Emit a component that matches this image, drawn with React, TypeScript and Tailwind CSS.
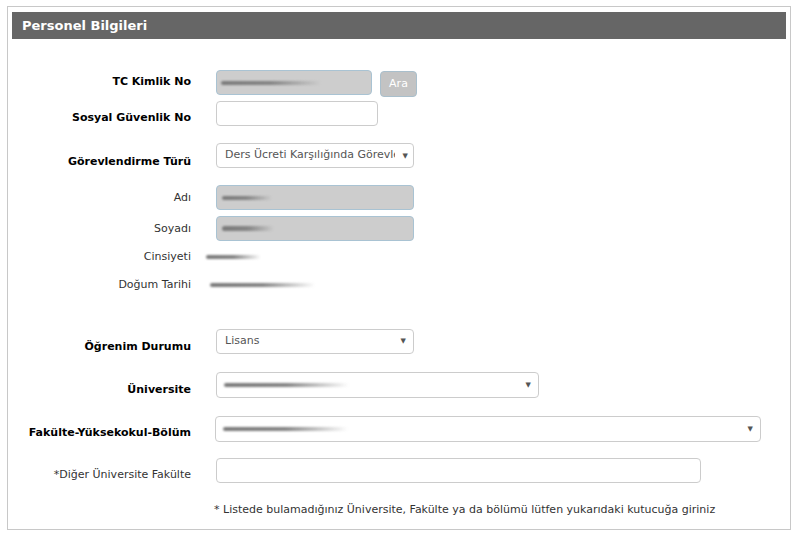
import React from "react";

const Blur = ({ w, className = "" }: { w: number; className?: string }) => (
  <div
    className={"h-[4px] rounded-full blur-[1px] bg-gradient-to-r from-[#7a7a7a] via-[#858585] to-transparent " + className}
    style={{ width: w }}
  />
);

const Arrow = () => (
  <span className="text-[7px] text-[#555] leading-none">▼</span>
);

export default function App() {
  return (
    <div className="bg-white w-[800px] h-[538px] pt-[6px] pl-[7px]" style={{ fontFamily: '"DejaVu Sans", Verdana, sans-serif' }}>
      <div className="w-[784px] h-[524px] border border-[#c8c8c8] px-[4px] pt-[5px] flex flex-col">
        <div className="h-[27px] bg-[#666666] flex items-center pl-[10px]">
          <span className="text-white font-bold text-[13px]">Personel Bilgileri</span>
        </div>

        <div className="flex flex-col -ml-[4px] text-[11px] text-[#333]">
          {/* TC */}
          <div className="flex items-start h-[25px] mt-[31px]">
            <div className="w-[183px] text-right font-bold text-black leading-[16px] mt-[4px]">TC Kimlik No</div>
            <div className="ml-[25px] w-[156px] h-[25px] rounded-[4px] bg-[#cdcdcd] border border-[#a9c3d3] flex items-center pl-[4px]">
              <Blur w={100} />
            </div>
            <button className="ml-[8px] mt-[1px] w-[37px] h-[26px] rounded-[4px] bg-[#c3c3c3] border border-[#a9bfcc] text-white text-[11px]">
              Ara
            </button>
          </div>
          {/* SGK */}
          <div className="flex items-start h-[25px] mt-[6px]">
            <div className="w-[183px] text-right font-bold text-black leading-[16px] mt-[9px]">Sosyal Güvenlik No</div>
            <div className="ml-[25px] w-[162px] h-[25px] rounded-[4px] bg-white border border-[#cccccc]" />
          </div>
          {/* Gorev */}
          <div className="flex items-start h-[25px] mt-[17px]">
            <div className="w-[183px] text-right font-bold text-black leading-[16px] mt-[11px]">Görevlendirme Türü</div>
            <div className="ml-[25px] w-[198px] h-[25px] rounded-[4px] bg-white border border-[#cccccc] flex items-center pl-[8px] pr-[5px] text-[#555] text-[11px]">
              <span className="w-[170px] overflow-hidden whitespace-nowrap">Ders Ücreti Karşılığında Görevlendirme</span>
              <span className="ml-auto"><Arrow /></span>
            </div>
          </div>
          {/* Adi */}
          <div className="flex items-start h-[25px] mt-[17px]">
            <div className="w-[183px] text-right leading-[16px] mt-[5px]">Adı</div>
            <div className="ml-[25px] w-[198px] h-[25px] rounded-[4px] bg-[#cdcdcd] border border-[#a9c3d3] flex items-center pl-[5px]">
              <Blur w={50} />
            </div>
          </div>
          {/* Soyadi */}
          <div className="flex items-start h-[25px] mt-[6px]">
            <div className="w-[183px] text-right leading-[16px] mt-[5px]">Soyadı</div>
            <div className="ml-[25px] w-[198px] h-[25px] rounded-[4px] bg-[#cdcdcd] border border-[#a9c3d3] flex items-center pl-[5px]">
              <Blur w={52} className="h-[5px]" />
            </div>
          </div>
          {/* Cinsiyeti */}
          <div className="flex items-center h-[16px] mt-[8px]">
            <div className="w-[183px] text-right leading-[16px]">Cinsiyeti</div>
            <div className="ml-[15px]"><Blur w={55} /></div>
          </div>
          {/* Dogum */}
          <div className="flex items-center h-[16px] mt-[12px]">
            <div className="w-[183px] text-right leading-[16px]">Doğum Tarihi</div>
            <div className="ml-[19px]"><Blur w={105} /></div>
          </div>
          {/* Ogrenim */}
          <div className="flex items-start h-[25px] mt-[36px]">
            <div className="w-[183px] text-right font-bold text-black leading-[16px] mt-[10px]">Öğrenim Durumu</div>
            <div className="ml-[25px] w-[198px] h-[25px] rounded-[4px] bg-white border border-[#cccccc] flex items-center pl-[8px] pr-[7px] text-[#555] text-[11px]">
              <span className="flex-1">Lisans</span>
              <Arrow />
            </div>
          </div>
          {/* Universite */}
          <div className="flex items-start h-[26px] mt-[18px]">
            <div className="w-[183px] text-right font-bold text-black leading-[16px] mt-[10px]">Üniversite</div>
            <div className="ml-[25px] w-[323px] h-[26px] rounded-[4px] bg-white border border-[#cccccc] flex items-center pl-[7px] pr-[7px]">
              <div className="flex-1"><Blur w={125} /></div>
              <Arrow />
            </div>
          </div>
          {/* Fakulte */}
          <div className="flex items-start h-[25px] mt-[18px]">
            <div className="w-[183px] text-right font-bold text-black leading-[16px] mt-[9px]">Fakülte-Yüksekokul-Bölüm</div>
            <div className="ml-[24px] w-[546px] h-[26px] rounded-[4px] bg-white border border-[#cccccc] flex items-center pl-[7px] pr-[7px]">
              <div className="flex-1"><Blur w={125} /></div>
              <Arrow />
            </div>
          </div>
          {/* Diger */}
          <div className="flex items-start h-[25px] mt-[17px]">
            <div className="w-[183px] text-right leading-[16px] mt-[9px]">*Diğer Üniversite Fakülte</div>
            <div className="ml-[25px] w-[485px] h-[25px] rounded-[4px] bg-white border border-[#cccccc]" />
          </div>
          {/* Note */}
          <div className="flex items-center h-[16px] mt-[19px]">
            <div className="w-[183px]" />
            <div className="ml-[23px] leading-[16px] whitespace-nowrap">* Listede bulamadığınız Üniversite, Fakülte ya da bölümü lütfen yukarıdaki kutucuğa giriniz</div>
          </div>
        </div>
      </div>
    </div>
  );
}
